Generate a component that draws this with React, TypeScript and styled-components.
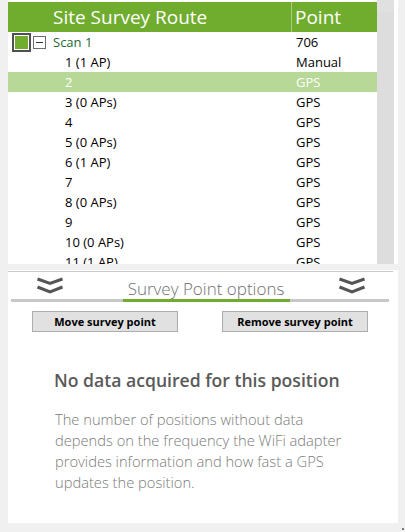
import React from "react";
import styled, { createGlobalStyle } from "styled-components";

const GlobalStyle = createGlobalStyle`
  html, body {
    margin: 0;
    padding: 0;
    background: #f0f0f0;
    font-family: "Open Sans", "Noto Sans", sans-serif;
  }
`;

interface RouteRow {
  label: string;
  point: string;
  selected?: boolean;
}

const rows: RouteRow[] = [
  { label: "1 (1 AP)", point: "Manual" },
  { label: "2", point: "GPS", selected: true },
  { label: "3 (0 APs)", point: "GPS" },
  { label: "4", point: "GPS" },
  { label: "5 (0 APs)", point: "GPS" },
  { label: "6 (1 AP)", point: "GPS" },
  { label: "7", point: "GPS" },
  { label: "8 (0 APs)", point: "GPS" },
  { label: "9", point: "GPS" },
  { label: "10 (0 APs)", point: "GPS" },
  { label: "11 (1 AP)", point: "GPS" },
];

const ChevronsIcon: React.FC = () => (
  <svg width="28" height="18" viewBox="0 0 28 18">
    <path
      d="M1.5 2 L14 6.5 L26.5 2 M1.5 10 L14 15 L26.5 10"
      fill="none"
      stroke="#555"
      strokeWidth="3"
    />
  </svg>
);

export default function App() {
  return (
    <>
      <GlobalStyle />
      <Window>
        <RouteSection>
          <Grid>
            <HeaderRow>
              <RouteHeader>Site Survey Route</RouteHeader>
              <PointHeader>Point</PointHeader>
            </HeaderRow>
            <Body>
              <Row>
                <ScanCell>
                  <CheckBox />
                  <Expander />
                  <ScanLabel>Scan 1</ScanLabel>
                </ScanCell>
                <PointCell>706</PointCell>
              </Row>
              {rows.map((r) => (
                <Row key={r.label} $selected={r.selected}>
                  <LabelCell>{r.label}</LabelCell>
                  <PointCell>{r.point}</PointCell>
                </Row>
              ))}
            </Body>
          </Grid>
          <ScrollBar />
        </RouteSection>
        <Splitter />
        <OptionsPanel>
          <TabBar>
            <ChevronsIcon />
            <TabTitle>Survey Point options</TabTitle>
            <ChevronsIcon />
          </TabBar>
          <TabLine>
            <TabActive />
          </TabLine>
          <ButtonRow>
            <ActionButton>Move survey point</ActionButton>
            <ActionButton>Remove survey point</ActionButton>
          </ButtonRow>
          <Message>
            <MessageTitle>No data acquired for this position</MessageTitle>
            <MessageText>
              The number of positions without data depends on the frequency the
              WiFi adapter provides information and how fast a GPS updates the
              position.
            </MessageText>
          </Message>
        </OptionsPanel>
        <Grip />
      </Window>
    </>
  );
}

const Window = styled.div`
  position: relative;
  width: 405px;
  height: 532px;
  box-sizing: border-box;
  padding: 0 7px 9px 8px;
  display: flex;
  flex-direction: column;
`;

const RouteSection = styled.div`
  height: 264px;
  background: #fff;
  display: flex;
  padding-right: 4px;
`;

const Grid = styled.div`
  width: 369px;
  display: flex;
  flex-direction: column;
  padding-top: 2px;
  overflow: hidden;
`;

const HeaderRow = styled.div`
  height: 30px;
  flex-shrink: 0;
  background: #70ad2f;
  display: grid;
  grid-template-columns: 284px 1fr;
  color: #fff;
  font-size: 19px;
  line-height: 30px;
`;

const RouteHeader = styled.div`
  padding-left: 45px;
  border-right: 1px solid #a6cd7e;
`;

const PointHeader = styled.div`
  padding-left: 3px;
`;

const Body = styled.div`
  flex: 1;
  overflow: hidden;
`;

const Row = styled.div<{ $selected?: boolean }>`
  height: 20px;
  display: grid;
  grid-template-columns: 284px 1fr;
  align-items: center;
  font-size: 13px;
  background: ${(p) => (p.$selected ? "#b8d898" : "transparent")};
  color: ${(p) => (p.$selected ? "#fff" : "#000")};
`;

const ScanCell = styled.div`
  display: flex;
  align-items: center;
  padding-left: 4px;
`;

const CheckBox = styled.span`
  width: 15px;
  height: 15px;
  border: 2px solid #505050;
  background: #70ad2f;
  box-shadow: inset 0 0 0 1px #fff;
`;

const Expander = styled.span`
  position: relative;
  width: 11px;
  height: 11px;
  margin-left: 2px;
  border: 1px solid #6d6d6d;
  &::after {
    content: "";
    position: absolute;
    left: 2px;
    right: 2px;
    top: 5px;
    height: 1px;
    background: #333;
  }
`;

const ScanLabel = styled.span`
  margin-left: 7px;
  color: #1c6b30;
`;

const LabelCell = styled.div`
  padding-left: 57px;
  white-space: nowrap;
`;

const PointCell = styled.div`
  padding-left: 4px;
`;

const ScrollBar = styled.div`
  width: 17px;
  background: #dddddd;
  border-top: 12px solid #e0e0e0;
`;

const Splitter = styled.div`
  height: 6px;
  flex-shrink: 0;
`;

const OptionsPanel = styled.div`
  flex: 1;
  background: #fff;
  padding-top: 1px;
  display: flex;
  flex-direction: column;
`;

const TabBar = styled.div`
  border-top: 1px solid #c8c8c8;
  margin-right: 5px;
  height: 28px;
  display: flex;
  align-items: center;
  justify-content: space-between;
  padding: 0 27px 0 28px;
  box-sizing: border-box;
`;

const TabTitle = styled.span`
  font-size: 17px;
  font-weight: 300;
  color: #707070;
  padding-top: 6px;
  margin-left: 10px;
`;

const TabLine = styled.div`
  position: relative;
  height: 3px;
  margin: 0 9px 0 3px;
  background: #c8c8c8;
`;

const TabActive = styled.div`
  margin-left: 112px;
  width: 167px;
  height: 3px;
  background: #70ad2f;
`;

const ButtonRow = styled.div`
  display: flex;
  justify-content: space-between;
  padding: 9px 30px 0 24px;
`;

const ActionButton = styled.button`
  width: 146px;
  height: 21px;
  padding: 0;
  background: #e1e1e1;
  border: 1px solid #adadad;
  font-family: "Open Sans", sans-serif;
  font-size: 11px;
  font-weight: 700;
  color: #000;
`;

const Message = styled.div`
  padding: 36px 10px 0 46px;
`;

const MessageTitle = styled.div`
  font-size: 17.6px;
  font-weight: 600;
  color: #5a5a5a;
  white-space: nowrap;
`;

const MessageText = styled.p`
  margin: 17px 0 0 1px;
  font-size: 14.7px;
  line-height: 21px;
  font-weight: 300;
  color: #7a7a7a;
  width: 300px;
`;

const Grip = styled.div`
  position: absolute;
  right: 1px;
  bottom: 2px;
  width: 2px;
  height: 2px;
  background: #777;
`;
